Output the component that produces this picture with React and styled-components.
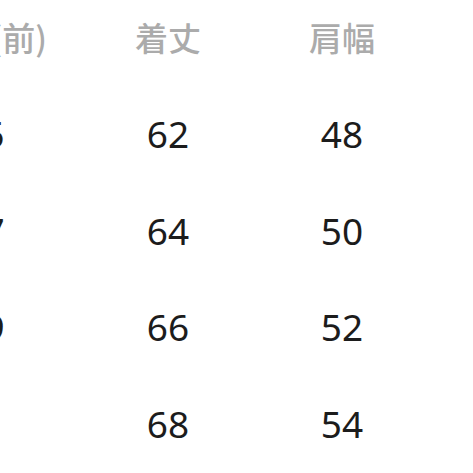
import React from "react";
import styled, { createGlobalStyle } from "styled-components";

const Global = createGlobalStyle`
  html, body {
    margin: 0;
    padding: 0;
    background: #fff;
    overflow: hidden;
  }
`;

const rows = [
  ["5", "62", "48"],
  ["7", "64", "50"],
  ["9", "66", "52"],
  ["", "68", "54"],
];

function App() {
  return (
    <>
      <Global />
      <Wrapper>
        <Table>
          <Head $end>身幅(前)</Head>
          <Head>着丈</Head>
          <Head>肩幅</Head>
          {rows.map((r, i) =>
            r.map((v, j) => <Cell key={i + "-" + j}>{v}</Cell>)
          )}
        </Table>
      </Wrapper>
    </>
  );
}

const Wrapper = styled.div`
  width: 473px;
  height: 473px;
  overflow: hidden;
  background: #fff;
`;

const Table = styled.div`
  display: grid;
  grid-template-columns: repeat(3, 174px);
  grid-auto-rows: 96.5px;
  margin-left: -93px;
  margin-top: -11px;
`;

const Head = styled.div`
  display: flex;
  align-items: center;
  justify-content: ${(p) => (p.$end ? "flex-end" : "center")};
  padding-right: ${(p) => (p.$end ? "34px" : "0")};
  white-space: nowrap;
  font-family: "Noto Sans CJK JP", "Noto Sans", sans-serif;
  font-size: 33px;
  font-weight: 500;
  color: #ababab;
`;

const Cell = styled.div`
  display: flex;
  align-items: center;
  justify-content: center;
  font-family: "Noto Sans", "Open Sans", sans-serif;
  font-size: 37px;
  color: #1c1c1c;
`;

export default App;
